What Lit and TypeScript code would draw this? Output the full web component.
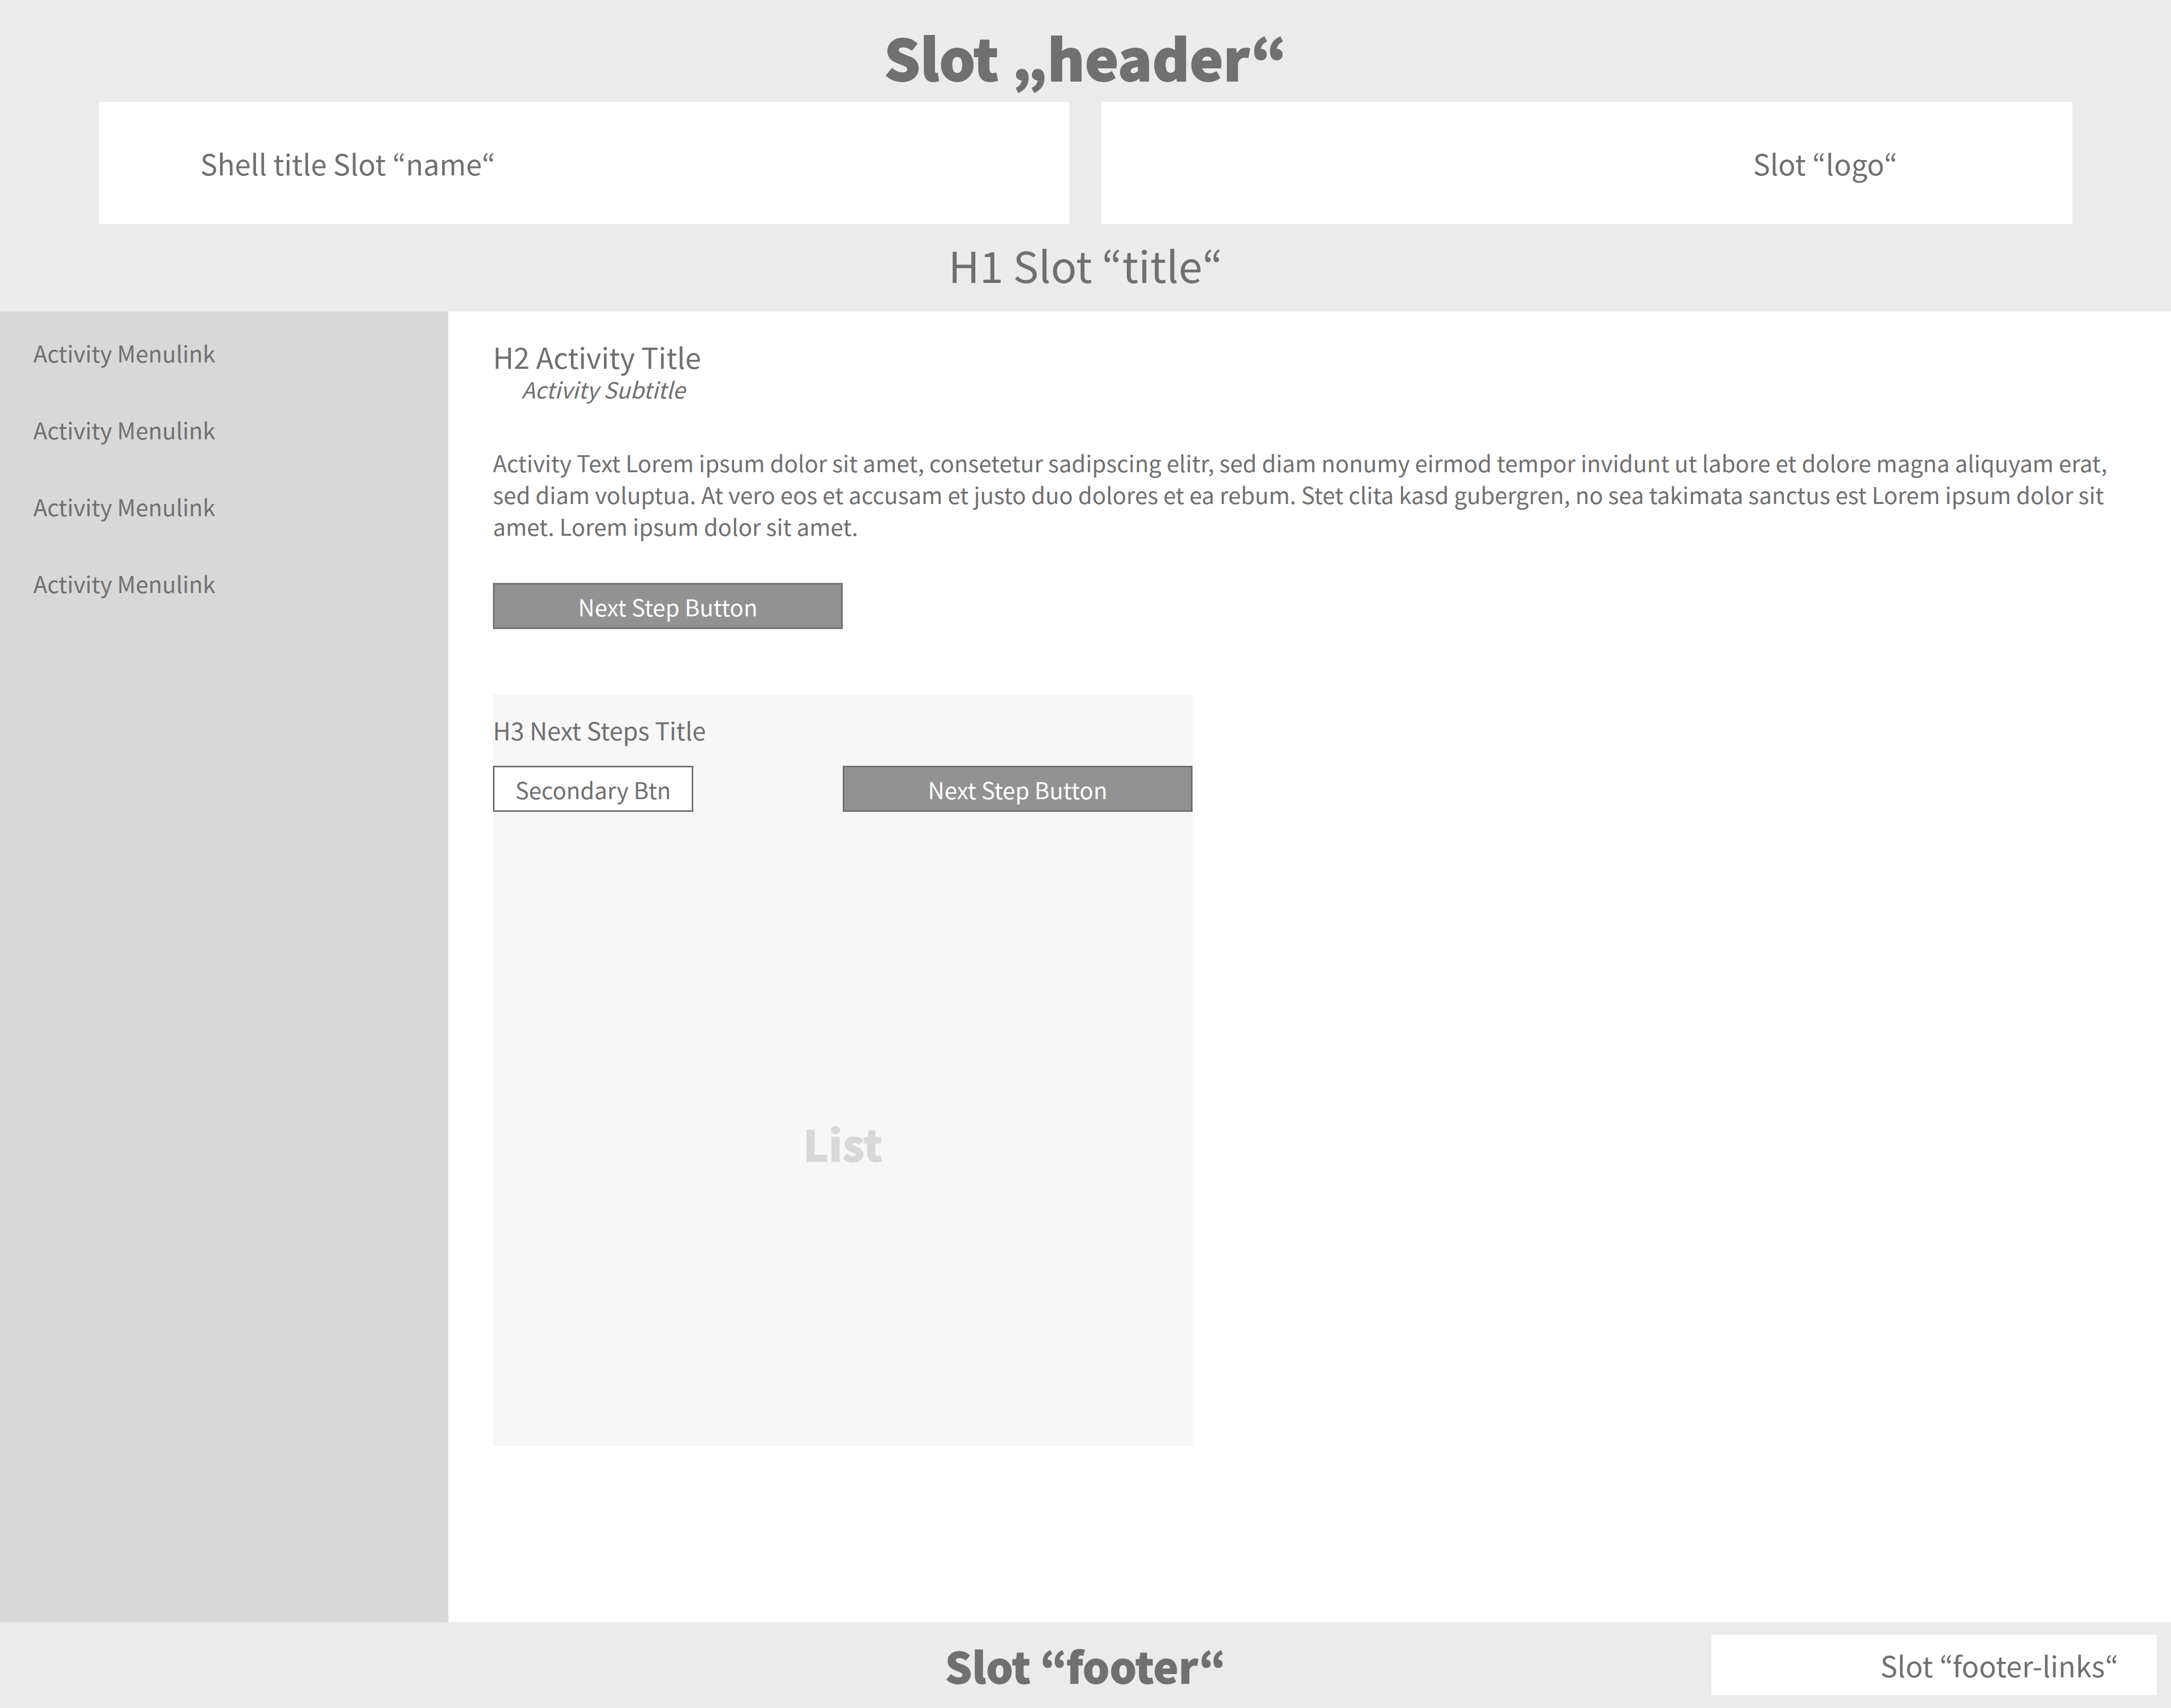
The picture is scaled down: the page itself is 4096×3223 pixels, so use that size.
import { LitElement, html, css } from "lit";
import { customElement } from "lit/decorators.js";

@customElement("app-root")
export class AppRoot extends LitElement {
  static styles = css`
    * {
      box-sizing: border-box;
      margin: 0;
      padding: 0;
    }
    :host {
      display: flex;
      flex-direction: column;
      min-height: 100vh;
      background: #ffffff;
      color: #707070;
      font-family: "Noto Sans CJK KR", "Noto Sans", sans-serif;
      font-size: 43px;
      line-height: 60px;
    }
    .header {
      padding: 35px 186px 13px;
      background: #ebebeb;
    }
    .slot-name {
      margin-bottom: 13px;
      font-size: 107px;
      line-height: 144px;
      font-weight: 900;
      text-align: center;
      -webkit-text-stroke: 2px currentColor;
    }
    .bars {
      display: grid;
      grid-template-columns: 1fr 1fr;
      gap: 60px;
    }
    .bar {
      display: flex;
      align-items: center;
      height: 231px;
      padding: 0 192px;
      background: #ffffff;
      font-size: 54px;
    }
    .bar.end {
      justify-content: flex-end;
      padding-right: 330px;
    }
    .page-title {
      font-size: 81px;
      line-height: 152px;
      font-weight: 400;
      text-align: center;
    }
    .body {
      display: grid;
      grid-template-columns: 846px 1fr;
      flex: 1;
    }
    .menu {
      display: flex;
      flex-direction: column;
      gap: 85px;
      padding: 47px 63px;
      background: #d8d8d8;
    }
    a {
      color: inherit;
      text-decoration: none;
    }
    .activity {
      display: flex;
      flex-direction: column;
      align-items: flex-start;
      padding: 54px 84px;
    }
    h2 {
      font-size: 54px;
      line-height: 62px;
      font-weight: 400;
    }
    .subtitle {
      padding-left: 54px;
      font-size: 42px;
      font-style: italic;
    }
    .text {
      margin: 78px 0;
    }
    button {
      width: 660px;
      height: 87px;
      border: 3px solid #707070;
      background: #929292;
      color: #ffffff;
      font: inherit;
    }
    .next {
      display: flex;
      flex-direction: column;
      width: 1320px;
      height: 1419px;
      margin-top: 123px;
      background: #f7f7f7;
    }
    h3 {
      margin-top: 37px;
      font-size: 46px;
      line-height: 60px;
      font-weight: 400;
    }
    .actions {
      display: flex;
      justify-content: space-between;
      margin-top: 38px;
    }
    .secondary {
      width: 378px;
      background: #ffffff;
      color: #707070;
    }
    .list {
      padding-top: 555px;
      color: #d8d8d8;
      font-size: 81px;
      line-height: 140px;
      font-weight: 900;
      text-align: center;
      -webkit-text-stroke: 1px currentColor;
    }
    .footer {
      display: grid;
      grid-template-columns: 1fr auto 1fr;
      align-items: center;
      height: 162px;
      padding: 0 27px;
      background: #ebebeb;
    }
    .footer .slot-name {
      grid-column: 2;
      margin: 0;
      font-size: 80px;
      -webkit-text-stroke: 1px currentColor;
    }
    .links {
      justify-self: end;
      width: 840px;
      height: 114px;
      padding-right: 72px;
      background: #ffffff;
      font-size: 54px;
      line-height: 114px;
      text-align: right;
    }
  `;

  render() {
    return html`
      <header class="header">
        <p class="slot-name">Slot „header“</p>
        <div class="bars">
          <div class="bar">Shell title Slot “name“</div>
          <div class="bar end">Slot “logo“</div>
        </div>
        <h1 class="page-title">H1 Slot “title“</h1>
      </header>
      <div class="body">
        <nav class="menu">
          ${[1, 2, 3, 4].map((n) => html`<a href="#activity-${n}">Activity Menulink</a>`)}
        </nav>
        <main class="activity">
          <h2>H2 Activity Title</h2>
          <p class="subtitle">Activity Subtitle</p>
          <p class="text">
            Activity Text Lorem ipsum dolor sit amet, consetetur sadipscing elitr, sed diam nonumy eirmod tempor invidunt ut labore et dolore magna aliquyam erat, sed diam voluptua. At vero eos et accusam et justo duo dolores et ea rebum. Stet clita kasd gubergren, no sea takimata sanctus est Lorem ipsum dolor sit amet. Lorem ipsum dolor sit amet.
          </p>
          <button type="button">Next Step Button</button>
          <section class="next">
            <h3>H3 Next Steps Title</h3>
            <div class="actions">
              <button type="button" class="secondary">Secondary Btn</button>
              <button type="button">Next Step Button</button>
            </div>
            <p class="list">List</p>
          </section>
        </main>
      </div>
      <footer class="footer">
        <p class="slot-name">Slot “footer“</p>
        <div class="links">Slot “footer-links“</div>
      </footer>
    `;
  }
}
